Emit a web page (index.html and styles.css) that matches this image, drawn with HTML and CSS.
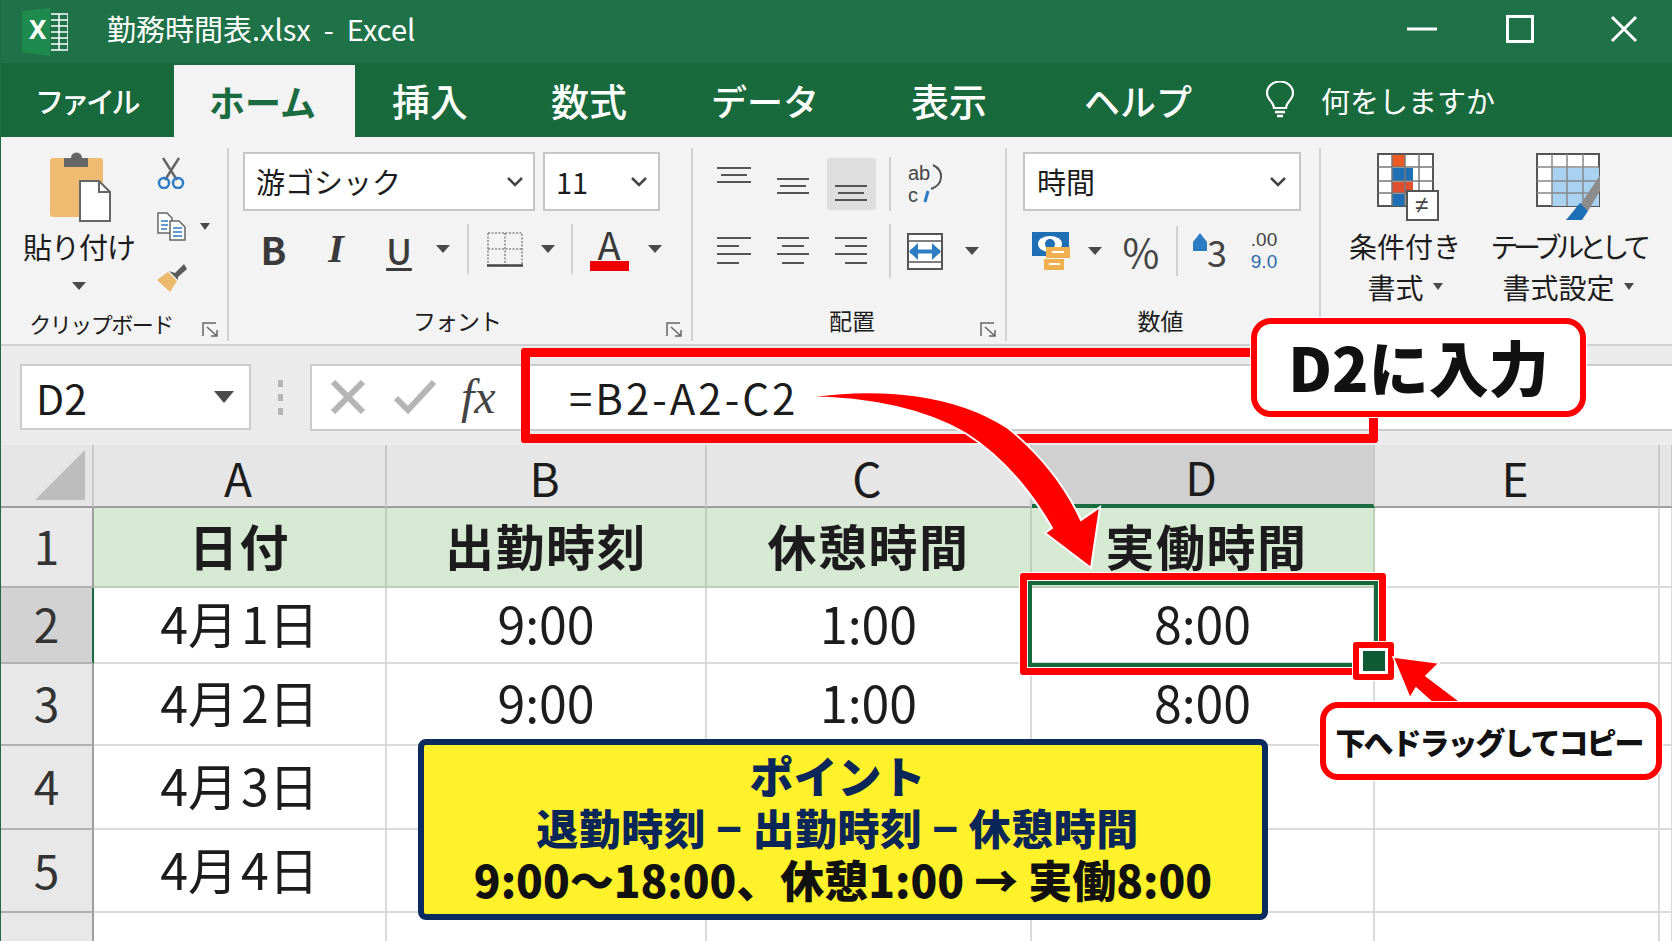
FILE: index.html
```html
<!DOCTYPE html>
<html lang="ja">
<head>
<meta charset="utf-8">
<title>勤務時間表.xlsx - Excel</title>
<link rel="stylesheet" href="styles.css">
</head>
<body>
<div class="page">
  <header class="titlebar">
    <svg class="xl-icon" width="46" height="48" viewBox="0 0 46 48">
      <polygon points="0,3 28,0 28,48 0,44" fill="#1f8a4e"/>
      <text x="7" y="31" class="xl-x">X</text>
      <path d="M29 6H46V42H29M37 6V42M29 12H46M29 18H46M29 24H46M29 30H46M29 36H46" fill="none" stroke="#fff" stroke-width="1.5"/>
    </svg>
    <div class="doc-title">勤務時間表.xlsx &nbsp;-&nbsp; Excel</div>
    <div class="win-btns">
      <svg width="30" height="30" viewBox="0 0 30 30"><path d="M0 15H30" stroke="#fff" stroke-width="3"/></svg>
      <svg width="28" height="28" viewBox="0 0 28 28"><rect x="1.5" y="1.5" width="25" height="25" fill="none" stroke="#fff" stroke-width="3"/></svg>
      <svg width="28" height="28" viewBox="0 0 28 28"><path d="M2 2L26 26M26 2L2 26" stroke="#fff" stroke-width="3"/></svg>
    </div>
  </header>

  <nav class="tabs">
    <div class="tab tab-file">ファイル</div>
    <div class="tab tab-active">ホーム</div>
    <div class="tab tab-k">挿入</div>
    <div class="tab tab-k">数式</div>
    <div class="tab">データ</div>
    <div class="tab tab-k">表示</div>
    <div class="tab">ヘルプ</div>
    <div class="tell">
      <svg width="30" height="38" viewBox="0 0 30 38"><path d="M9 27C9 21 2 19 2 12A13 11.500 0 0 1 28 12C28 19 21 21 21 27Z" fill="none" stroke="#fff" stroke-width="2.200"/><path d="M10 31H20M12 35H18" stroke="#fff" stroke-width="2.500"/></svg>
      <span>何をしますか</span>
    </div>
  </nav>

  <section class="ribbon">
    <div class="group g-clip">
      <div class="g-body clip-body">
        <div class="paste">
          <svg width="62" height="70" viewBox="0 0 62 70">
            <rect x="1" y="6" width="53" height="59" rx="3" fill="#eebb70"/>
            <path d="M15 15V6H22A5 5 0 0 1 33 6H39V15Z" fill="#666"/>
            <path d="M31 29H50L61 40V69H31Z" fill="#fff" stroke="#666" stroke-width="2"/>
            <path d="M50 29V40H61" fill="none" stroke="#666" stroke-width="2"/>
          </svg>
          <div class="paste-label">貼り付け</div>
          <i class="caret"></i>
        </div>
        <div class="clip-tools">
          <svg width="28" height="32" viewBox="0 0 28 32"><path d="M6 1L20 23M22 1L8 23" stroke="#666" stroke-width="2.500"/><circle cx="7" cy="26" r="5" fill="none" stroke="#2d7cc4" stroke-width="2.500"/><circle cx="21" cy="26" r="5" fill="none" stroke="#2d7cc4" stroke-width="2.500"/></svg>
          <div class="copy-row">
            <svg width="29" height="29" viewBox="0 0 29 29"><path d="M1 1H10L15 6V21H1Z" fill="#fff" stroke="#666" stroke-width="1.500"/><path d="M13 9H22L28 15V28H13Z" fill="#fff" stroke="#666" stroke-width="1.500"/><path d="M4 9H11M4 13H11M4 17H10M16 16H25M16 20H25M16 24H25" stroke="#2d7cc4" stroke-width="1.500"/></svg>
            <i class="caret caret-sm"></i>
          </div>
          <svg width="30" height="28" viewBox="0 0 30 28"><path d="M0 16L11 8L20 17L13 28Z" fill="#ecb86c"/><path d="M12 7L18 9L27 0L30 5L21 13L21 16Z" fill="#5a5a5a"/></svg>
        </div>
      </div>
      <div class="g-label clip-label">クリップボード<svg class="launcher" width="16" height="15" viewBox="0 0 16 15"><path d="M1 14V1H14M5 5L15 14M9 14H15V8" fill="none" stroke="#666" stroke-width="1.500"/></svg></div>
    </div>

    <div class="group g-font">
      <div class="g-body">
        <div class="combo-row">
          <div class="combo combo-font"><span>游ゴシック</span><svg width="16" height="10" viewBox="0 0 16 10"><path d="M1 1L8 8L15 1" fill="none" stroke="#444" stroke-width="2.500"/></svg></div>
          <div class="combo combo-size"><span>11</span><svg width="16" height="10" viewBox="0 0 16 10"><path d="M1 1L8 8L15 1" fill="none" stroke="#444" stroke-width="2.500"/></svg></div>
        </div>
        <div class="tool-row font-tools">
          <b class="t-b">B</b>
          <span class="t-i">I</span>
          <span class="t-u">U</span>
          <i class="caret"></i>
          <i class="sep"></i>
          <svg width="36" height="35" viewBox="0 0 36 35"><path d="M1 1H35V33M1 1V33M18 1V33M1 17H35" fill="none" stroke="#888" stroke-width="1.500" stroke-dasharray="2 1.500"/><path d="M0 33.500H36" stroke="#444" stroke-width="2.500"/></svg>
          <i class="caret"></i>
          <i class="sep"></i>
          <div class="t-a"><span>A</span><i></i></div>
          <i class="caret"></i>
        </div>
      </div>
      <div class="g-label g-label-font">フォント<svg class="launcher" width="16" height="15" viewBox="0 0 16 15"><path d="M1 14V1H14M5 5L15 14M9 14H15V8" fill="none" stroke="#666" stroke-width="1.500"/></svg></div>
    </div>

    <div class="group g-align">
      <div class="g-body">
        <div class="align-row">
          <svg width="36" height="54" viewBox="0 0 36 54"><path d="M1 11H35M5 18H31M1 25H35" stroke="#555" stroke-width="2"/></svg>
          <svg width="34" height="54" viewBox="0 0 34 54"><path d="M1 22H33M4 29H30M1 36H33" stroke="#555" stroke-width="2"/></svg>
          <div class="align-on"><svg width="34" height="54" viewBox="0 0 34 54"><path d="M1 29H33M4 36H30M1 43H33" stroke="#555" stroke-width="2"/></svg></div>
          <i class="sep sep-tall"></i>
          <svg class="wrap-icon" width="36" height="42" viewBox="0 0 36 42"><text x="1" y="17" class="wrap-txt">ab</text><text x="1" y="39" class="wrap-txt">c</text><path d="M26 2C38 8 36 22 24 26" fill="none" stroke="#555" stroke-width="2"/><path d="M21 28L18 39" stroke="#2d7cc4" stroke-width="3"/></svg>
          <span></span>
        </div>
        <div class="align-row align-row2">
          <svg width="36" height="30" viewBox="0 0 36 30"><path d="M1 2H35M1 10H23M1 18H35M1 27H23" stroke="#555" stroke-width="2"/></svg>
          <svg width="34" height="30" viewBox="0 0 34 30"><path d="M1 2H33M6 10H28M1 18H33M6 27H28" stroke="#555" stroke-width="2"/></svg>
          <svg width="34" height="30" viewBox="0 0 34 30"><path d="M1 2H33M11 10H33M1 18H33M11 27H33" stroke="#555" stroke-width="2"/></svg>
          <i class="sep sep-tall"></i>
          <svg width="36" height="37" viewBox="0 0 36 37"><rect x="1" y="1" width="34" height="35" fill="#fff" stroke="#555" stroke-width="2"/><path d="M1 8H35M1 29H35" stroke="#555" stroke-width="1.500"/><path d="M3 18.500H33" stroke="#2d7cc4" stroke-width="4"/><path d="M11 10L2 18.500L11 27ZM25 10L34 18.500L25 27Z" fill="#2d7cc4"/></svg>
          <i class="caret"></i>
        </div>
      </div>
      <div class="g-label">配置<svg class="launcher" width="16" height="15" viewBox="0 0 16 15"><path d="M1 14V1H14M5 5L15 14M9 14H15V8" fill="none" stroke="#666" stroke-width="1.500"/></svg></div>
    </div>

    <div class="group g-num">
      <div class="g-body">
        <div class="combo combo-num"><span>時間</span><svg width="16" height="10" viewBox="0 0 16 10"><path d="M1 1L8 8L15 1" fill="none" stroke="#444" stroke-width="2.500"/></svg></div>
        <div class="tool-row num-tools">
          <svg width="38" height="38" viewBox="0 0 38 38"><rect x="0" y="0" width="37" height="24" fill="#1f6fb5"/><ellipse cx="18" cy="12" rx="12" ry="8" fill="#fff"/><circle cx="18" cy="12" r="5" fill="#1f6fb5"/><rect x="14" y="15" width="24" height="11" fill="#f0b050"/><rect x="12" y="27" width="20" height="11" fill="#f0b050"/><path d="M20 20H32M17 32H28" stroke="#fff" stroke-width="2"/></svg>
          <i class="caret"></i>
          <span class="t-pct">%</span>
          <i class="sep"></i>
          <div class="t-inc"><svg width="14" height="18" viewBox="0 0 14 18"><path d="M7 0L14 9V18H0V9Z" fill="#2d7cc4"/></svg><span>3</span></div>
          <div class="t-dec"><span>.00</span><span class="dec-b">9.0</span></div>
        </div>
      </div>
      <div class="g-label">数値</div>
    </div>

    <div class="group g-style">
      <div class="style-btn">
        <svg width="68" height="68" viewBox="0 0 68 68">
          <rect x="7" y="1" width="55" height="52" fill="#fff" stroke="#555" stroke-width="2"/>
          <rect x="21" y="2" width="13" height="12" fill="#ee5a24"/>
          <rect x="21" y="15" width="21" height="13" fill="#1f6fb5"/>
          <rect x="21" y="29" width="21" height="11" fill="#e05030"/>
          <rect x="21" y="41" width="13" height="12" fill="#1f6fb5"/>
          <path d="M21 1V53M34 1V53M48 1V53M7 14H62M7 28H62M7 40H62" stroke="#777" stroke-width="1.500"/>
          <rect x="36" y="38" width="31" height="29" fill="#fff" stroke="#555" stroke-width="2"/>
          <text x="44" y="60" class="ne-txt">≠</text>
        </svg>
        <div class="style-label">条件付き</div>
        <div class="style-label">書式<i class="caret caret-sm"></i></div>
      </div>
      <div class="style-btn">
        <svg width="68" height="68" viewBox="0 0 68 68">
          <rect x="3" y="1" width="62" height="52" fill="#fff" stroke="#555" stroke-width="2"/>
          <rect x="18" y="15" width="47" height="38" fill="#a9d1f0"/>
          <path d="M18 1V53M33 1V53M49 1V53M3 14H65M3 28H65M3 40H65" stroke="#888" stroke-width="1.500"/>
          <path d="M66 22L46 52L54 58L66 38Z" fill="#8c8c8c"/>
          <path d="M46 50L54 58L48 67H32Z" fill="#1f6fb5"/>
        </svg>
        <div class="style-label style-narrow">テーブルとして</div>
        <div class="style-label">書式設定<i class="caret caret-sm"></i></div>
      </div>
      <div class="g-label style-group-label">スタイル</div>
    </div>
  </section>

  <section class="formula">
    <div class="namebox"><span>D2</span><i class="caret caret-lg"></i></div>
    <div class="dots"><i></i><i></i><i></i></div>
    <div class="fbox">
      <svg width="36" height="34" viewBox="0 0 36 34"><path d="M3 2L33 32M33 2L3 32" stroke="#b5b5b5" stroke-width="6"/></svg>
      <svg width="42" height="34" viewBox="0 0 42 34"><path d="M2 18L14 30L40 2" fill="none" stroke="#b5b5b5" stroke-width="6"/></svg>
      <span class="fx">fx</span>
      <span class="ftext">=B2-A2-C2</span>
    </div>
  </section>

  <section class="sheet">
    <div class="hd corner"><svg width="50" height="50" viewBox="0 0 50 50"><polygon points="0,50 50,0 50,50" fill="#bdbdbd"/></svg></div>
    <div class="hd">A</div><div class="hd">B</div><div class="hd">C</div><div class="hd hd-sel">D</div><div class="hd">E</div><div class="hd"></div>

    <div class="rh">1</div><div class="c th">日付</div><div class="c th">出勤時刻</div><div class="c th">休憩時間</div><div class="c th th-d">実働時間</div><div class="c"></div><div class="c"></div>
    <div class="rh rh-sel">2</div><div class="c">4月 1日</div><div class="c">9:00</div><div class="c">1:00</div><div class="c">8:00</div><div class="c"></div><div class="c"></div>
    <div class="rh">3</div><div class="c">4月 2日</div><div class="c">9:00</div><div class="c">1:00</div><div class="c">8:00</div><div class="c"></div><div class="c"></div>
    <div class="rh">4</div><div class="c">4月 3日</div><div class="c"></div><div class="c"></div><div class="c"></div><div class="c"></div><div class="c"></div>
    <div class="rh">5</div><div class="c">4月 4日</div><div class="c"></div><div class="c"></div><div class="c"></div><div class="c"></div><div class="c"></div>
    <div class="rh"></div><div class="c"></div><div class="c"></div><div class="c"></div><div class="c"></div><div class="c"></div><div class="c"></div>
  </section>

  <div class="mark-formula"></div>
  <div class="mark-cell"><div class="mark-cell-in"></div></div>
  <div class="mark-handle"><i></i></div>

  <svg class="arrows" width="1672" height="941" viewBox="0 0 1672 941">
    <path d="M806 397C880 386 955 393 1008 428C1045 458 1067 490 1081 520L1100 507L1091 568L1045 533L1052 528C1030 490 1000 455 965 433C925 410 870 398 806 397Z" fill="#f00" stroke="#fff" stroke-width="2"/>
    <path d="M1393 657L1439 663L1426 676L1463 704H1434L1416 688L1410 698Z" fill="#f00" stroke="#fff" stroke-width="1.500"/>
  </svg>

  <div class="callout callout-d2">D2に入力</div>
  <div class="callout callout-copy">下へドラッグしてコピー</div>

  <div class="point">
    <div class="pt-title">ポイント</div>
    <div class="pt-line">退勤時刻 − 出勤時刻 − 休憩時間</div>
    <div class="pt-ex">9:00～18:00、休憩1:00 → 実働8:00</div>
  </div>
</div>
</body>
</html>
```
FILE: styles.css
```css
* { box-sizing: border-box; }
html, body { margin: 0; padding: 0; }
body { font-family: "Noto Sans CJK JP", "Noto Sans", sans-serif; color: #1c1c1c; background: #fff; }
i { font-style: normal; display: block; }

.page { position: relative; width: 1672px; height: 941px; overflow: hidden; border-left: 1px solid #1d6b43; }

/* title bar */
.titlebar { display: flex; align-items: center; height: 63px; background: #1f7247; padding-left: 21px; color: #fff; }
.xl-x { font: 700 26px "Noto Sans", sans-serif; fill: #fff; }
.doc-title { margin-left: 39px; margin-bottom: 8px; font-size: 29px; white-space: nowrap; }
.win-btns { display: flex; align-items: center; margin-left: auto; margin-right: 34px; margin-bottom: 6px; }
.win-btns svg + svg { margin-left: 69px; }
.win-btns svg + svg + svg { margin-left: 76px; }

/* tabs */
.tabs { display: grid; grid-template-columns: 173px 181px 150px 168px 184px 184px 194px auto; height: 74px; background: #18693c; color: #fff; }
.tab { display: flex; align-items: center; justify-content: center; font-size: 36px; font-weight: 500; line-height: 1; }
.tab-k { font-size: 38px; }
.tab-file { font-size: 29px; font-weight: 500; letter-spacing: -3.500px; justify-content: flex-start; padding-left: 34px; }
.tab-active { margin-top: 2px; padding-right: 4px; background: #f3f3f3; color: #1a6b3f; font-weight: 700; }
.tell { display: flex; align-items: center; padding-left: 30px; gap: 26px; font-size: 29px; }

/* ribbon */
.ribbon { display: flex; height: 209px; background: #f3f3f3; border-bottom: 2px solid #d0d0d0; }
.group { position: relative; display: flex; flex-direction: column; margin-top: 11px; height: 193px; border-right: 2px solid #d2d2d2; }
.g-clip { width: 228px; }
.g-font { width: 464px; padding-left: 14px; }
.g-align { width: 314px; padding-left: 11px; }
.g-num { width: 314px; padding-left: 16px; }
.g-style { flex: 1; flex-direction: row; border-right: 0; padding-left: 9px; gap: 10px; }
.g-body { flex: 1; padding-top: 4px; }
.g-label { position: relative; height: 36px; display: flex; align-items: center; justify-content: center; font-size: 23px; line-height: 1; white-space: nowrap; padding-bottom: 6px; }
.launcher { position: absolute; right: 9px; top: 17px; }
.clip-label { padding-right: 26px; padding-bottom: 0; font-size: 22px; letter-spacing: -1.500px; }
.g-label-font { padding-right: 20px; letter-spacing: -1px; }
.g-align .g-label { margin-left: -5px; }
.g-num .g-label { margin-left: -21px; }

.clip-body { display: flex; }
.paste { width: 156px; display: flex; flex-direction: column; align-items: center; }
.paste > svg { margin-left: 1px; }
.paste-label { margin-top: 4px; font-size: 29px; line-height: 40px; letter-spacing: -1px; }
.paste .caret { margin-top: 16px; }
.clip-tools { display: flex; flex-direction: column; align-items: flex-start; padding-top: 5px; gap: 23px; }
.copy-row { display: flex; align-items: center; gap: 14px; }

.caret { width: 0; height: 0; border-left: 7px solid transparent; border-right: 7px solid transparent; border-top: 8px solid #4a4a4a; }
.caret-sm { border-left-width: 5px; border-right-width: 5px; border-top-width: 7px; }
.caret-lg { border-left-width: 10px; border-right-width: 10px; border-top-width: 12px; }
.sep { width: 2px; height: 50px; background: #d0d0d0; }
.sep-tall { height: 54px; }

.combo { display: flex; align-items: center; justify-content: space-between; height: 59px; background: #fff; border: 2px solid #c6c6c6; font-size: 29px; line-height: 1; padding: 0 10px 0 11px; }
.combo-row { display: flex; gap: 8px; }
.combo-font { width: 292px; }
.combo-size { width: 117px; padding-right: 11px; }
.combo-num { width: 278px; padding-left: 12px; padding-right: 13px; }

.tool-row { display: grid; align-items: center; justify-items: center; height: 50px; margin-top: 15px; }
.font-tools { margin-top: 13px; grid-template-columns: 61px 64px 62px 26px 24px 50px 36px 12px 62px 30px; }
.num-tools { grid-template-columns: 56px 32px 60px 12px 54px 54px; }
.t-b { font-size: 38px; color: #3a3a3a; line-height: 1; }
.t-i { font-family: "Liberation Serif", serif; font-style: italic; font-weight: 700; font-size: 40px; color: #3a3a3a; line-height: 1; }
.t-u { font-size: 35px; color: #3a3a3a; text-decoration: underline; text-underline-offset: 3px; line-height: 1; font-weight: 500; }
.t-a { display: flex; flex-direction: column; align-items: center; font-size: 38px; line-height: 1; color: #3a3a3a; }
.t-a span { height: 34px; line-height: 34px; }
.t-a i { width: 39px; height: 10px; background: #ee0000; }
.t-pct { font-size: 40px; line-height: 1; color: #444; }
.t-inc { display: flex; align-items: flex-start; font-size: 36px; line-height: 1; color: #444; }
.t-dec { display: flex; flex-direction: column; align-items: center; font-family: "Liberation Sans", sans-serif; font-size: 19px; line-height: 22px; color: #444; }
.dec-b { color: #2d6cab; }
.wrap-icon { overflow: visible; }
.wrap-txt { font-family: "Liberation Sans", sans-serif; font-size: 20px; fill: #444; }
.ne-txt { font-family: "Liberation Sans", sans-serif; font-size: 24px; fill: #444; }

.align-row { display: grid; grid-template-columns: 60px 57px 60px 18px 52px 42px; align-items: center; justify-items: center; height: 54px; margin-top: 5px; }
.align-row2 { height: 50px; margin-top: 13px; }
.align-on { width: 49px; height: 52px; background: #dedede; border-radius: 3px; display: flex; justify-content: center; align-items: center; }

.style-btn { width: 150px; display: flex; flex-direction: column; align-items: center; padding-top: 5px; }
.style-btn + .style-btn { width: 156px; }
.style-label { display: flex; align-items: center; gap: 9px; height: 41px; font-size: 28px; line-height: 1; white-space: nowrap; }
.style-btn svg + .style-label { margin-top: 4px; }
.style-narrow { letter-spacing: -5.500px; }
.style-group-label { position: absolute; left: 156px; bottom: -3px; width: 60px; height: 36px; font-size: 16px; padding-bottom: 0; }

/* formula bar */
.formula { display: flex; align-items: center; height: 99px; background: #ebebeb; padding: 18px 0 15px 19px; }
.namebox { width: 231px; height: 66px; display: flex; align-items: center; justify-content: space-between; background: #fff; border: 2px solid #cbcbcb; padding: 0 15px 0 14px; font-size: 41px; line-height: 1; }
.dots { width: 59px; display: flex; flex-direction: column; align-items: center; gap: 7px; }
.dots i { width: 5px; height: 7px; background: #b5b5b5; }
.fbox { flex: 1; height: 67px; display: flex; align-items: center; background: #fff; border: 2px solid #cbcbcb; border-right: 0; padding-left: 18px; }
.fbox svg + svg { margin-left: 28px; }
.fx { margin-left: 25px; font-family: "Liberation Serif", serif; font-style: italic; font-size: 48px; line-height: 1; color: #444; width: 39px; }
.ftext { margin-left: 69px; font-size: 42px; letter-spacing: 3px; line-height: 1; color: #1c1c1c; }

/* sheet */
.sheet { display: grid; grid-template-columns: 93px 293px 320px 325px 343px 285px 13px; grid-template-rows: 63px 80px 76px 82px 84px 83px 40px; }
.hd { display: flex; align-items: center; justify-content: center; background: #e6e6e6; border-right: 2px solid #c8c8c8; border-bottom: 2px solid #9e9e9e; padding-top: 2px; padding-right: 3px; font-size: 46px; line-height: 1; }
.corner { align-items: flex-end; justify-content: flex-end; padding: 0 7px 6px 0; }
.hd-sel { background: #d0d0d0; border-bottom: 4px solid #1a6b3f; }
.rh { display: flex; align-items: center; justify-content: center; background: #e8e8e8; border-right: 2px solid #9e9e9e; border-bottom: 2px solid #b0b0b0; padding-bottom: 4px; font-size: 46px; line-height: 1; color: #333; }
.rh-sel { background: #d2d2d2; border-right: 2px solid #1a6b3f; }
.c { display: flex; align-items: center; justify-content: center; border-right: 2px solid #dadada; border-bottom: 2px solid #dadada; padding-bottom: 6px; font-size: 50px; word-spacing: -8px; line-height: 1; white-space: pre; }
.th { background: #d6e9d2; font-weight: 700; font-size: 49px; border-right-color: #bcd0b8; border-bottom-color: #bcd0b8; letter-spacing: 1.500px; }
.th-d { padding-left: 8px; }

/* annotations */
.mark-formula { position: absolute; left: 520px; top: 348px; width: 857px; height: 95px; border: 9px solid #f00; border-radius: 3px; }
.mark-cell { position: absolute; left: 1019px; top: 573px; width: 366px; height: 102px; border: 8px solid #f00; border-radius: 3px; box-shadow: 0 0 0 1px #fff; }
.mark-cell-in { width: 100%; height: 100%; border: 4px solid #15693c; outline: 1px solid #fff; }
.mark-handle { position: absolute; left: 1352px; top: 642px; width: 41px; height: 38px; border: 6px solid #f00; border-radius: 3px; background: #fff; display: flex; align-items: center; justify-content: center; box-shadow: 0 0 0 1px #fff; }
.mark-handle i { width: 22px; height: 20px; background: #0f5c34; }
.arrows { position: absolute; left: -1px; top: 0; pointer-events: none; }
.callout { position: absolute; display: flex; align-items: center; justify-content: center; background: #fff; border: 6px solid #f00; color: #111; font-weight: 900; white-space: nowrap; line-height: 1; box-shadow: 0 0 0 1px #fff; }
.callout-d2 { left: 1250px; top: 318px; width: 335px; height: 99px; border-radius: 20px; font-size: 60px; padding-bottom: 4px; }
.callout-copy { left: 1319px; top: 702px; width: 342px; height: 78px; border-radius: 18px; font-size: 30px; letter-spacing: -2px; padding-right: 4px; }
.point { position: absolute; left: 417px; top: 739px; width: 850px; height: 181px; background: #fff22a; border: 6px solid #0b2a5e; border-radius: 8px; display: flex; flex-direction: column; align-items: center; color: #0b2658; font-weight: 900; line-height: 1; padding-top: 4px; }
.pt-title { font-size: 44px; height: 52px; display: flex; align-items: center; padding-right: 11px; }
.pt-line { font-size: 42px; height: 52px; display: flex; align-items: center; white-space: pre; letter-spacing: 0.500px; padding-right: 11px; }
.pt-ex { font-size: 44px; height: 52px; display: flex; align-items: center; color: #111; white-space: pre; }
```
